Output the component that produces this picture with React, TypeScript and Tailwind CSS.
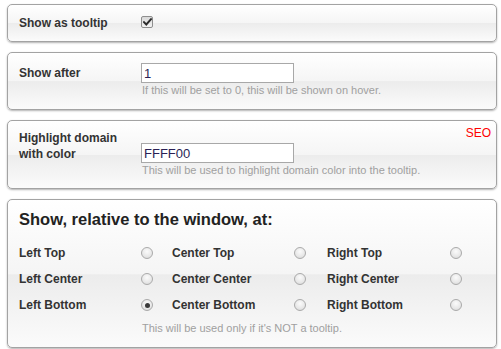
import React from "react";

const box =
  "relative rounded-[5px] border border-[#a3a3a3] bg-[linear-gradient(to_bottom,#ffffff_0%,#f5f5f5_50%,#ececec_51%,#fbfbfb_100%)] shadow-[0_1px_2px_rgba(0,0,0,0.3)]";
const label = "w-[122px] shrink-0 text-[12px] leading-[16px] font-bold text-[#333333]";
const hint = "text-[11px] leading-[13px] text-[#a0a0a0]";
const input =
  "block w-[153px] h-[20px] border border-[#a8a8a8] bg-white px-[2px] text-[13px] leading-[18px] text-[#2a1f55] outline-none font-['Liberation_Sans',Arial,sans-serif]";

function Radio({ checked = false }: { checked?: boolean }) {
  return (
    <span className="flex h-[12px] w-[12px] items-center justify-center rounded-full border border-[#aaaaaa] bg-[radial-gradient(circle_at_50%_35%,#fbfbfb_0%,#e9e9e9_55%,#d6d6d6_100%)]">
      {checked && <span className="h-[5px] w-[5px] rounded-full bg-[#3a3a3a]" />}
    </span>
  );
}

function Checkbox() {
  return (
    <span className="flex h-[12px] w-[12px] items-center justify-center rounded-[2px] border border-[#8e8e8e] bg-[linear-gradient(to_bottom,#d9d9d9,#f3f3f3)]">
      <svg width="9" height="8" viewBox="0 0 9 8">
        <path d="M1 4.2 L3.3 6.5 L8 1.2" fill="none" stroke="#2c2c2c" strokeWidth="1.9" strokeLinecap="square" />
      </svg>
    </span>
  );
}

const rows: [string, string, string, number][] = [
  ["Left Top", "Center Top", "Right Top", -1],
  ["Left Center", "Center Center", "Right Center", -1],
  ["Left Bottom", "Center Bottom", "Right Bottom", 0],
];

export default function App() {
  return (
    <div className="w-[501px] h-[349px] overflow-hidden bg-white font-['Liberation_Sans',Arial,sans-serif]">
      <div className="flex w-[497px] flex-col pl-[7px] pt-[4px]">
        {/* Box 1 */}
        <div className={`${box} flex h-[38px] items-center pl-[11px]`}>
          <div className={label}>Show as tooltip</div>
          <div className="mt-[-2px]">
            <Checkbox />
          </div>
        </div>

        {/* Box 2 */}
        <div className={`${box} mt-[10px] flex h-[58px] items-start pl-[11px] pt-[10px]`}>
          <div className={`${label} mt-[2px]`}>Show after</div>
          <div className="flex flex-col">
            <input className={input} readOnly value="1" />
            <div className={`${hint} mt-[1px] pl-[1px]`}>If this will be set to 0, this will be shown on hover.</div>
          </div>
        </div>

        {/* Box 3 */}
        <div className={`${box} mt-[10px] flex h-[69px] items-start pl-[11px]`}>
          <div className={`${label} mt-[9px]`}>
            Highlight domain
            <br />
            with color
          </div>
          <div className="mt-[22px] flex flex-col">
            <input className={input} readOnly value="FFFF00" />
            <div className={`${hint} mt-[1px] pl-[1px]`}>This will be used to highlight domain color into the tooltip.</div>
          </div>
          <span className="absolute right-[5px] top-[5px] text-[12px] leading-[14px] text-[#ff0000]">SEO</span>
        </div>

        {/* Box 4 */}
        <div className={`${box} mt-[10px] flex h-[149px] flex-col pl-[11px] pt-[9px]`}>
          <div className="text-[16.5px] leading-[20px] font-bold text-[#222222]">Show, relative to the window, at:</div>
          <div className="mt-[11px] flex flex-col">
            {rows.map((r, ri) => (
              <div key={ri} className="grid h-[26px] grid-cols-[122px_31px_122px_33px_123px_12px] items-center">
                <span className="text-[12px] font-bold text-[#333333]">{r[0]}</span>
                <Radio checked={r[3] === 0} />
                <span className="text-[12px] font-bold text-[#333333]">{r[1]}</span>
                <Radio checked={r[3] === 1} />
                <span className="text-[12px] font-bold text-[#333333]">{r[2]}</span>
                <Radio checked={r[3] === 2} />
              </div>
            ))}
          </div>
          <div className={`${hint} ml-[123px] mt-[4px]`}>This will be used only if it's NOT a tooltip.</div>
        </div>
      </div>
    </div>
  );
}
